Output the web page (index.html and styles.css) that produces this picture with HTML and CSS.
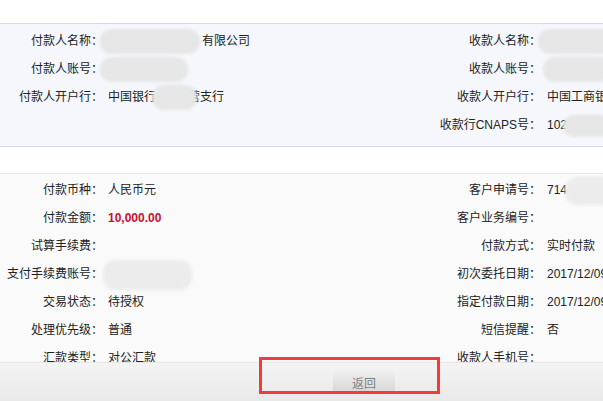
FILE: index.html
```html
<!DOCTYPE html>
<html lang="zh-CN">
<head>
<meta charset="utf-8">
<title>付款详情</title>
<link rel="stylesheet" href="styles.css">
</head>
<body>
<div class="page">
  <div class="top-gap"></div>
  <section class="panel payee">
    <div class="grid">
      <div class="lbl">付款人名称：</div>
      <div class="val"><span class="blur b-name"></span><span class="after">有限公司</span></div>
      <div class="lbl">收款人名称：</div>
      <div class="val"><span class="blur b-rname"></span></div>

      <div class="lbl">付款人账号：</div>
      <div class="val"><span class="blur b-acct"></span></div>
      <div class="lbl">收款人账号：</div>
      <div class="val"><span class="blur b-racct"></span></div>

      <div class="lbl">付款人开户行：</div>
      <div class="val">中国银行<span class="blur b-bank"></span>营支行</div>
      <div class="lbl">收款人开户行：</div>
      <div class="val">中国工商银行</div>

      <div class="lbl"></div>
      <div class="val"></div>
      <div class="lbl">收款行<span class="num">CNAPS</span>号：</div>
      <div class="val"><span class="num">102</span><span class="blur b-cnaps"></span></div>
    </div>
  </section>
  <div class="mid-gap"></div>
  <section class="panel detail">
    <div class="grid">
      <div class="lbl">付款币种：</div>
      <div class="val">人民币元</div>
      <div class="lbl">客户申请号：</div>
      <div class="val"><span class="num">714</span><span class="blur b-apply"></span></div>

      <div class="lbl">付款金额：</div>
      <div class="val"><span class="num amount">10,000.00</span></div>
      <div class="lbl">客户业务编号：</div>
      <div class="val"></div>

      <div class="lbl">试算手续费：</div>
      <div class="val"></div>
      <div class="lbl">付款方式：</div>
      <div class="val">实时付款</div>

      <div class="lbl">支付手续费账号：</div>
      <div class="val"><span class="blur b-fee"></span></div>
      <div class="lbl">初次委托日期：</div>
      <div class="val"><span class="num">2017/12/09</span></div>

      <div class="lbl">交易状态：</div>
      <div class="val">待授权</div>
      <div class="lbl">指定付款日期：</div>
      <div class="val"><span class="num">2017/12/09</span></div>

      <div class="lbl">处理优先级：</div>
      <div class="val">普通</div>
      <div class="lbl">短信提醒：</div>
      <div class="val">否</div>

      <div class="lbl">汇款类型：</div>
      <div class="val">对公汇款</div>
      <div class="lbl">收款人手机号：</div>
      <div class="val"></div>
    </div>
  </section>
</div>
<footer class="footer">
  <button class="btn" type="button">返回</button>
</footer>
<div class="annot"></div>
</body>
</html>
```
FILE: styles.css
```css
html, body {
  margin: 0;
  padding: 0;
  background: #ffffff;
  overflow: hidden;
}
body {
  font-family: "Noto Sans CJK SC", "Liberation Sans", sans-serif;
  font-size: 12px;
  color: #222222;
  width: 603px;
  height: 401px;
}
.page {
  width: 100%;
}
.top-gap {
  height: 23px;
}
.panel {
  overflow: hidden;
}
.payee {
  background: #f5f7fc;
  border-top: 1px solid #cdd8ee;
  border-bottom: 1px solid #cdd8ee;
  padding: 2px 0 8px;
}
.mid-gap {
  height: 26px;
}
.detail {
  background: #fafafa;
  border-top: 1px solid #e8e8e8;
  padding-top: 1px;
  height: 240px;
}
.grid {
  display: grid;
  grid-template-columns: 103px 297px 141px 220px;
  grid-auto-rows: 28px;
  width: 761px;
}
.lbl {
  text-align: right;
  line-height: 28px;
  white-space: nowrap;
}
.val {
  line-height: 28px;
  white-space: nowrap;
  padding-left: 5px;
}
.grid > .val:nth-child(4n) {
  padding-left: 6px;
}
.num {
  font-family: "Liberation Sans", Arial, sans-serif;
}
.amount {
  color: #c8102e;
  font-weight: bold;
}
.blur {
  display: inline-block;
  height: 25px;
  background: #e6e6e6;
  border-radius: 12px;
  filter: blur(1.5px);
  vertical-align: middle;
  position: relative;
  z-index: 1;
}
.b-name { width: 100px; margin-left: -8px; }
.after { margin-left: 2px; }
.b-acct { width: 88px; margin-left: -8px; }
.b-bank { width: 45px; margin-left: -4px; margin-right: -9px; }
.b-rname { width: 80px; margin-left: -9px; }
.b-racct { width: 70px; margin-left: -4px; }
.b-cnaps { width: 50px; height: 22px; margin-left: -4px; }
.b-apply { width: 50px; height: 28px; margin-left: -2px; background: #ececec; }
.b-fee { width: 89px; height: 30px; margin-left: -5px; background: #ececec; }

.footer {
  position: fixed;
  left: 0;
  bottom: 0;
  width: 728px;
  height: 39px;
  background: linear-gradient(#f4f4f4, #e9e9e9);
  border-top: 1px solid #e6e6e6;
  display: flex;
  justify-content: center;
  align-items: flex-start;
  padding-top: 8px;
  box-sizing: border-box;
}
.btn {
  width: 62px;
  height: 23px;
  border: none;
  border-radius: 2px;
  background: linear-gradient(#efefef, #d6d6d6);
  color: #808080;
  font-family: "Noto Sans CJK SC", sans-serif;
  font-size: 12px;
  padding: 0;
}
.annot {
  position: absolute;
  left: 259px;
  top: 357px;
  width: 175px;
  height: 31px;
  border: 3px solid #f23b3b;
}
```
